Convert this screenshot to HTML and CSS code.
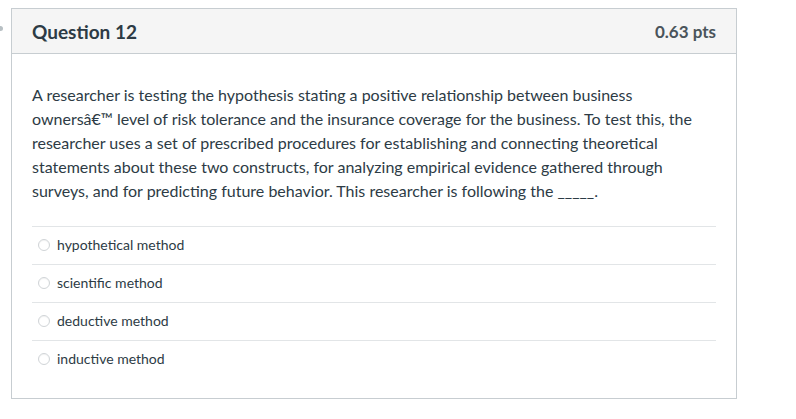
FILE: index.html
```html
<!DOCTYPE html>
<html>
<head>
<meta charset="utf-8">
<link rel="stylesheet" href="styles.css">
</head>
<body>
<span class="edge-dot"></span>
<div class="question">
  <div class="header">
    <span class="title">Question 12</span>
    <span class="pts">0.63 pts</span>
  </div>
  <div class="content">
    <p class="text">A researcher is testing the hypothesis stating a positive relationship between business ownersâ€™ level of risk tolerance and the insurance coverage for the business. To test this, the researcher uses a set of prescribed procedures for establishing and connecting theoretical statements about these two constructs, for analyzing empirical evidence gathered through surveys, and for predicting future behavior. This researcher is following the _____.</p>
    <div class="answers">
      <div class="answer"><span class="radio"></span><span class="label">hypothetical method</span></div>
      <div class="answer"><span class="radio"></span><span class="label">scientific method</span></div>
      <div class="answer"><span class="radio"></span><span class="label">deductive method</span></div>
      <div class="answer"><span class="radio"></span><span class="label">inductive method</span></div>
    </div>
  </div>
</div>
</body>
</html>
```

FILE: styles.css
```css
html, body {
  margin: 0;
  padding: 0;
  background: #fff;
}
body {
  font-family: Lato, "Open Sans", sans-serif;
  color: #2d3b45;
  position: relative;
  width: 796px;
  height: 419px;
  overflow: hidden;
}
.edge-dot {
  position: absolute;
  left: -2px;
  top: 26px;
  width: 5px;
  height: 5px;
  border-radius: 50%;
  background: #b8c0c4;
}
.question {
  margin: 8px 0 0 11px;
  width: 724px;
  height: 389px;
  border: 1px solid #c7cdd1;
  box-sizing: content-box;
}
.header {
  display: flex;
  justify-content: space-between;
  align-items: center;
  height: 44px;
  padding: 0 20px;
  background: #f5f5f5;
  border-bottom: 1px solid #c7cdd1;
}
.title {
  font-size: 19px;
  font-weight: 700;
}
.pts {
  font-size: 17px;
  font-weight: 700;
  color: #4a545b;
}
.content {
  padding: 29px 20px 0 20px;
}
.text {
  margin: 0;
  font-size: 16px;
  line-height: 24px;
}
.answers {
  margin-top: 23px;
}
.answer {
  display: flex;
  align-items: center;
  height: 35px;
  padding-bottom: 2px;
  border-top: 1px solid #e2e5e7;
  font-size: 14px;
}
.radio {
  width: 10px;
  height: 10px;
  border: 1px solid #d0d4d7;
  border-radius: 50%;
  margin-left: 6px;
  margin-right: 7px;
  box-shadow: inset 0 1px 1px rgba(0,0,0,0.05);
}
.label {
  line-height: 20px;
}
```
